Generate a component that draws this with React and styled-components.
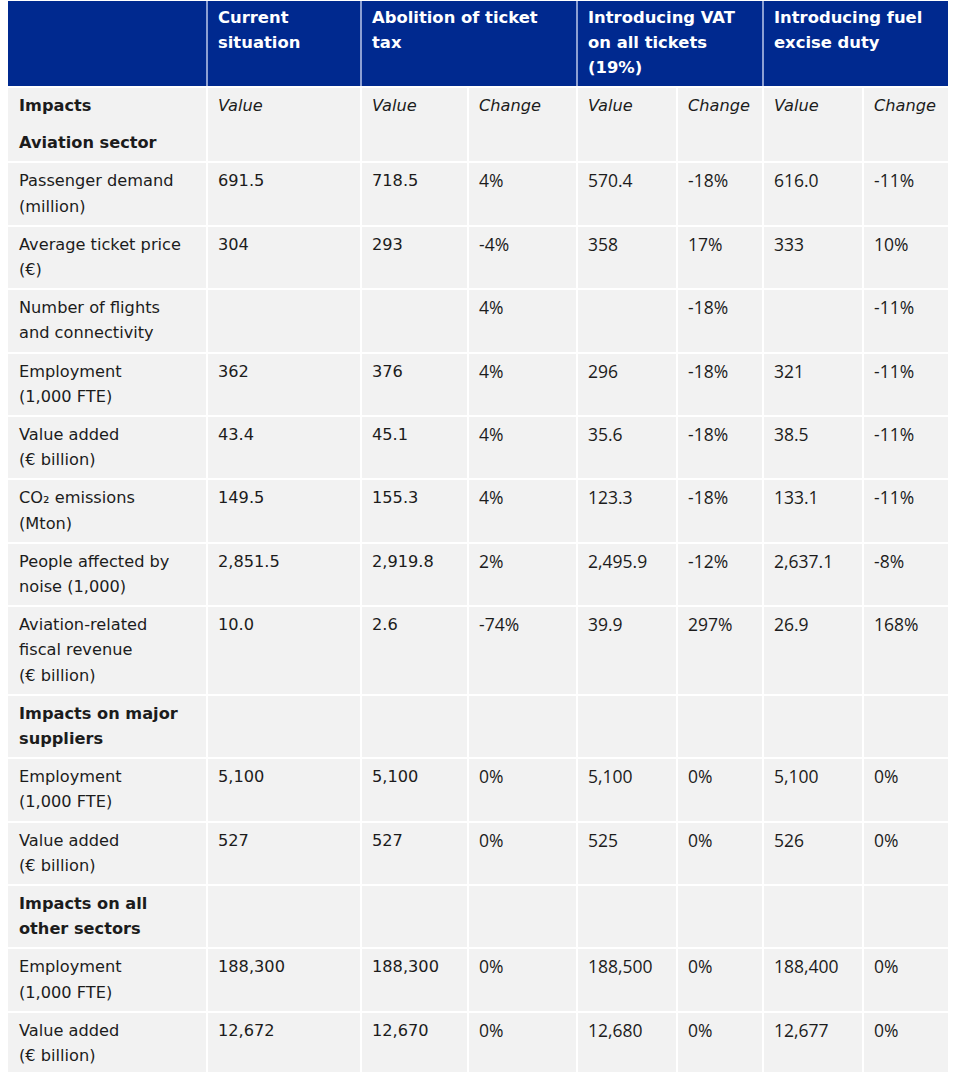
import React from "react";
import styled, { createGlobalStyle } from "styled-components";

const COLS = "198px 152px 105px 107px 98px 84px 98px 84px";

const rows = [
  { label: ["Passenger demand", "(million)"], cur: "691.5", ab: ["718.5", "4%"], vat: ["570.4", "-18%"], fuel: ["616.0", "-11%"] },
  { label: ["Average ticket price", "(€)"], cur: "304", ab: ["293", "-4%"], vat: ["358", "17%"], fuel: ["333", "10%"] },
  { label: ["Number of flights", "and connectivity"], cur: "", ab: ["", "4%"], vat: ["", "-18%"], fuel: ["", "-11%"] },
  { label: ["Employment", "(1,000 FTE)"], cur: "362", ab: ["376", "4%"], vat: ["296", "-18%"], fuel: ["321", "-11%"] },
  { label: ["Value added", "(€ billion)"], cur: "43.4", ab: ["45.1", "4%"], vat: ["35.6", "-18%"], fuel: ["38.5", "-11%"] },
  { label: ["CO₂ emissions", "(Mton)"], cur: "149.5", ab: ["155.3", "4%"], vat: ["123.3", "-18%"], fuel: ["133.1", "-11%"] },
  { label: ["People affected by", "noise (1,000)"], cur: "2,851.5", ab: ["2,919.8", "2%"], vat: ["2,495.9", "-12%"], fuel: ["2,637.1", "-8%"] },
  { label: ["Aviation-related", "fiscal revenue", "(€ billion)"], cur: "10.0", ab: ["2.6", "-74%"], vat: ["39.9", "297%"], fuel: ["26.9", "168%"] },
  { section: ["Impacts on major", "suppliers"] },
  { label: ["Employment", "(1,000 FTE)"], cur: "5,100", ab: ["5,100", "0%"], vat: ["5,100", "0%"], fuel: ["5,100", "0%"] },
  { label: ["Value added", "(€ billion)"], cur: "527", ab: ["527", "0%"], vat: ["525", "0%"], fuel: ["526", "0%"] },
  { section: ["Impacts on all", "other sectors"] },
  { label: ["Employment", "(1,000 FTE)"], cur: "188,300", ab: ["188,300", "0%"], vat: ["188,500", "0%"], fuel: ["188,400", "0%"] },
  { label: ["Value added", "(€ billion)"], cur: "12,672", ab: ["12,670", "0%"], vat: ["12,680", "0%"], fuel: ["12,677", "0%"] },
];

const headers = [
  ["Current", "situation"],
  ["Abolition of ticket", "tax"],
  ["Introducing VAT", "on all tickets", "(19%)"],
  ["Introducing fuel", "excise duty"],
];

const Lines = ({ lines }) =>
  lines.map((l, i) => (
    <React.Fragment key={i}>
      {i > 0 && <br />}
      {l}
    </React.Fragment>
  ));

export default function App() {
  return (
    <>
      <GlobalStyle />
      <Page>
        <HeadGrid>
          <HeadCell />
          {headers.map((h, i) => (
            <HeadCell key={i}>
              <Lines lines={h} />
            </HeadCell>
          ))}
        </HeadGrid>
        <BodyGrid>
          <Cell>
            <Bold>Impacts</Bold>
            <Bold $gap>Aviation sector</Bold>
          </Cell>
          <Cell $italic>Value</Cell>
          <Cell $italic>Value</Cell>
          <Cell $italic>Change</Cell>
          <Cell $italic>Value</Cell>
          <Cell $italic>Change</Cell>
          <Cell $italic>Value</Cell>
          <Cell $italic>Change</Cell>

          {rows.map((r, i) =>
            r.section ? (
              <React.Fragment key={i}>
                <Cell $bold>
                  <Lines lines={r.section} />
                </Cell>
                {Array.from({ length: 7 }).map((_, j) => (
                  <Cell key={j} />
                ))}
              </React.Fragment>
            ) : (
              <React.Fragment key={i}>
                <Cell>
                  <Lines lines={r.label} />
                </Cell>
                <Cell>{r.cur}</Cell>
                <Cell>{r.ab[0]}</Cell>
                <Cell $alt>{r.ab[1]}</Cell>
                <Cell $alt>{r.vat[0]}</Cell>
                <Cell $alt>{r.vat[1]}</Cell>
                <Cell $alt>{r.fuel[0]}</Cell>
                <Cell $alt>{r.fuel[1]}</Cell>
              </React.Fragment>
            )
          )}
        </BodyGrid>
      </Page>
    </>
  );
}

const GlobalStyle = createGlobalStyle`
  html, body {
    margin: 0;
    background: #ffffff;
  }
  body {
    font-family: "DejaVu Sans", Verdana, sans-serif;
    color: #1c1c1c;
  }
`;

const Page = styled.div`
  width: 940px;
  padding: 1px 0 0 8px;
`;

const HeadGrid = styled.div`
  display: grid;
  grid-template-columns: 198px 152px 214px 184px 184px;
  column-gap: 2px;
  background: #8c9fd3;
  margin-bottom: 2px;
`;

const HeadCell = styled.div`
  background: #00298f;
  color: #ffffff;
  font-weight: bold;
  font-size: 16.4px;
  line-height: 25px;
  padding: 4px 10px 6px;
  min-height: 75px;
  white-space: nowrap;
`;

const BodyGrid = styled.div`
  display: grid;
  grid-template-columns: ${COLS};
  gap: 2px;
  background: #ffffff;
`;

const Cell = styled.div`
  background: #f2f2f2;
  padding: 5px 10px 6px;
  font-size: ${({ $alt }) => ($alt ? "17.5px" : "16.2px")};
  font-family: ${({ $alt }) =>
    $alt ? `"Open Sans", "Liberation Sans", sans-serif` : `"DejaVu Sans", Verdana, sans-serif`};
  font-style: ${({ $italic }) => ($italic ? "italic" : "normal")};
  font-weight: ${({ $bold }) => ($bold ? "bold" : "normal")};
  line-height: 25.2px;
  white-space: nowrap;
  &:nth-child(8n + 1) {
    padding-left: 11px;
  }
`;

const Bold = styled.div`
  font-weight: bold;
  margin-top: ${({ $gap }) => ($gap ? "12px" : "0")};
`;
